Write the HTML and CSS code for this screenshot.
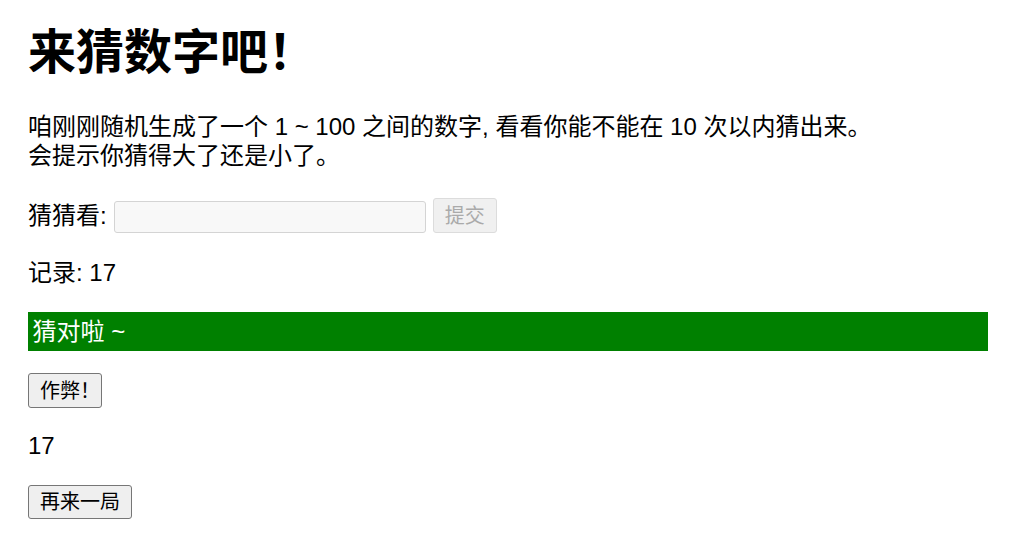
FILE: index.html
```html
<!DOCTYPE html>
<html lang="zh-CN">
<head>
<meta charset="utf-8">
<title>猜数字游戏</title>
<link rel="stylesheet" href="styles.css">
</head>
<body>
  <h1 class="title">来猜数字吧！</h1>
  <p class="intro">咱刚刚随机生成了一个 1 ~ 100 之间的数字, 看看你能不能在 10 次以内猜出来。<br>会提示你猜得大了还是小了。</p>
  <div class="form">
    <label class="label" for="guessField">猜猜看:</label>
    <input class="guess-field" id="guessField" type="text" disabled>
    <input class="guess-submit" type="submit" value="提交" disabled>
  </div>
  <div class="result-paras">
    <p class="guesses">记录: 17</p>
    <p class="last-result">猜对啦 ~</p>
    <p class="low-or-hi"></p>
  </div>
  <button class="btn cheat" type="button">作弊！</button>
  <p class="answer">17</p>
  <button class="btn restart" type="button">再来一局</button>
</body>
</html>
```
FILE: styles.css
```css
html {
  background: #ffffff;
}
body {
  margin: 0 41px 0 28px;
  font-family: "Liberation Sans", "Noto Sans CJK SC", sans-serif;
  font-size: 24px;
  line-height: 1.15;
  color: #000000;
}
.title {
  margin: 25px 0 33px;
  font-size: 48px;
  font-weight: bold;
  line-height: 1.15;
}
.intro {
  margin: 0;
  line-height: 28.5px;
}
.form {
  margin-top: 28px;
  display: flex;
  align-items: flex-end;
  gap: 7px;
}
.label {
  align-self: center;
}
.guess-field {
  box-sizing: border-box;
  width: 312px;
  height: 32px;
  margin: 0;
  border: 1px solid #d4d4d4;
  border-radius: 3px;
  background: #f8f8f8;
  font: inherit;
  font-size: 20px;
}
.guess-submit {
  box-sizing: border-box;
  height: 35px;
  margin: 0;
  padding: 0 11px;
  border: 1px solid #dcdcdc;
  border-radius: 3px;
  background: #f0f0f0;
  color: #aaaaaa;
  font-family: "Liberation Sans", "Noto Sans CJK SC", sans-serif;
  font-size: 20px;
  line-height: 24px;
}
.result-paras {
  margin: 0;
}
.guesses {
  margin: 26px 0 0;
}
.last-result {
  margin: 25px 0 0;
  padding: 6px 4.5px;
  background: #008000;
  color: #ffffff;
  line-height: 27.6px;
}
.low-or-hi {
  margin: 0;
}
.btn {
  display: block;
  box-sizing: border-box;
  height: 34px;
  margin: 0;
  padding: 0 11px;
  border: 1px solid #767676;
  border-radius: 3px;
  background: #efefef;
  color: #000000;
  font-family: "Liberation Sans", "Noto Sans CJK SC", sans-serif;
  font-size: 20px;
  line-height: 24px;
  font-feature-settings: "halt";
}
.cheat {
  margin-top: 22px;
  height: 35px;
}
.answer {
  margin: 24px 0 0;
}
.restart {
  margin-top: 25px;
}
```
